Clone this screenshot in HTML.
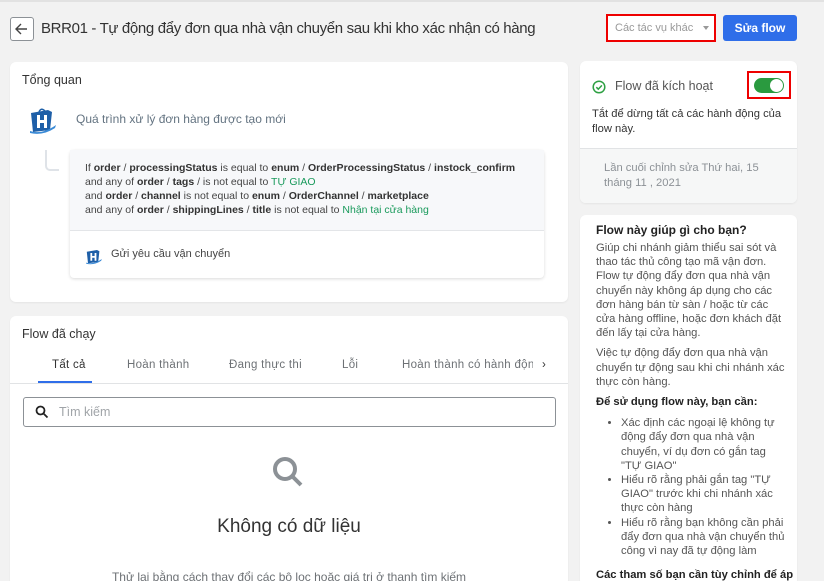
<!DOCTYPE html>
<html><head><meta charset="utf-8"><style>
*{box-sizing:border-box;margin:0;padding:0}
html,body{width:824px;height:581px;overflow:hidden}
body{background:#f2f2f2;font-family:"Liberation Sans",sans-serif;color:#212b36;position:relative}
.abs{position:absolute}
.card{position:absolute;background:#fff;border-radius:6px;box-shadow:0 1px 2px rgba(0,0,0,.06)}
b{font-weight:bold;color:#333}
.g{color:#1a9a5c}
</style></head><body>
<div class="abs" style="left:0;top:0;width:824px;height:2px;background:#e2e2e2"></div>
<div class="abs" style="left:10px;top:17px;width:24px;height:24px;border:1px solid #8c9196;border-radius:3px;background:#fff">
<svg width="22" height="22" viewBox="0 0 22 22"><path d="M16 11H6M10 6l-5 5 5 5" stroke="#444" stroke-width="1.4" fill="none"/></svg></div>
<div class="abs" style="left:41px;top:20px;font-size:15px;color:#333;letter-spacing:-0.35px">BRR01 - Tự động đẩy đơn qua nhà vận chuyển sau khi kho xác nhận có hàng</div>
<div class="abs" style="left:606px;top:14px;width:110px;height:28px;border:2px solid #e00;background:#fff;font-size:11px;color:#999;padding:6px 0 0 7px">Các tác vụ khác<span style="position:absolute;right:5px;top:10px;border-left:3px solid transparent;border-right:3px solid transparent;border-top:4px solid #999"></span></div>
<div class="abs" style="left:723px;top:15px;width:74px;height:26px;background:#2f6ee9;border-radius:3px;color:#fff;font-size:12px;font-weight:bold;text-align:center;line-height:26px">Sửa flow</div>

<div class="card" style="left:10px;top:62px;width:558px;height:240px">
<div class="abs" style="left:12px;top:11px;font-size:12.5px;color:#333">Tổng quan</div>
<svg class="abs" style="left:18px;top:43px" width="30" height="30" viewBox="0 0 30 30"><path d="M3 8l17-3 4 2-2 18-17 2z" fill="#1e5fa8"/><path d="M9 10h3v5h4v-5h3v13h-3v-5h-4v5h-3z" fill="#fff"/><path d="M2 26q12 4 26-6l-1 3q-12 8-25 5z" fill="#3a8ad6"/><path d="M11 7q2-5 6-1" stroke="#1e5fa8" fill="none" stroke-width="1.5"/></svg>
<div class="abs" style="left:66px;top:50px;font-size:12px;color:#637381">Quá trình xử lý đơn hàng được tạo mới</div>
<div class="abs" style="left:35px;top:88px;width:14px;height:21px;border-left:2px solid #dfe3e8;border-bottom:2px solid #dfe3e8;border-bottom-left-radius:5px"></div>
<div class="abs" style="left:60px;top:88px;width:474px;height:128px;border-radius:4px;box-shadow:0 1px 3px rgba(0,0,0,.15);background:#fff">
<div style="background:#f7f8fa;height:81px;border-bottom:1px solid #e3e5e8;padding:11px 0 0 15px;font-size:10.5px;line-height:14px;color:#444">
If <b>order</b> / <b>processingStatus</b> is equal to <b>enum</b> / <b>OrderProcessingStatus</b> / <b>instock_confirm</b><br>
and any of <b>order</b> / <b>tags</b> / is not equal to <span class="g">TỰ GIAO</span><br>
and <b>order</b> / <b>channel</b> is not equal to <b>enum</b> / <b>OrderChannel</b> / <b>marketplace</b><br>
and any of <b>order</b> / <b>shippingLines</b> / <b>title</b> is not equal to <span class="g">Nhận tại cửa hàng</span></div>
<svg class="abs" style="left:14px;top:97px" width="20" height="18" viewBox="0 0 30 30"><path d="M3 8l17-3 4 2-2 18-17 2z" fill="#1e5fa8"/><path d="M9 10h3v5h4v-5h3v13h-3v-5h-4v5h-3z" fill="#fff"/><path d="M2 26q12 4 26-6l-1 3q-12 8-25 5z" fill="#3a8ad6"/></svg>
<div class="abs" style="left:41px;top:98px;font-size:11px;color:#444">Gửi yêu cầu vận chuyển</div>
</div></div>

<div class="card" style="left:10px;top:316px;width:558px;height:270px">
<div class="abs" style="left:12px;top:11px;font-size:12.5px;color:#333">Flow đã chạy</div>
<div class="abs" style="left:0;top:67px;width:558px;height:1px;background:#e1e3e5"></div>
<div class="abs" style="left:28px;top:65px;width:54px;height:2px;background:#2f6ee9"></div>
<div class="abs" style="top:43px;left:0;font-size:11.5px;color:#6d7175;letter-spacing:.3px;white-space:nowrap">
<span class="abs" style="left:42px;color:#333">Tất cả</span><span class="abs" style="left:117px">Hoàn thành</span><span class="abs" style="left:219px">Đang thực thi</span><span class="abs" style="left:332px">Lỗi</span><span class="abs" style="left:392px;width:131px;overflow:hidden">Hoàn thành có hành động</span><span class="abs" style="left:532px;color:#333">›</span></div>
<div class="abs" style="left:13px;top:81px;width:533px;height:30px;border:1px solid #8c9196;border-radius:3px">
<svg class="abs" style="left:11px;top:7px" width="14" height="14" viewBox="0 0 14 14"><circle cx="5.5" cy="5.5" r="4" stroke="#222" stroke-width="1.8" fill="none"/><path d="M8.5 8.5l4 4" stroke="#222" stroke-width="1.8"/></svg>
<span class="abs" style="left:35px;top:7px;font-size:12.5px;color:#a0a4a8">Tìm kiếm</span></div>
<svg class="abs" style="left:260px;top:138px" width="36" height="36" viewBox="0 0 36 36"><circle cx="15" cy="15" r="10" stroke="#8c9196" stroke-width="4" fill="none"/><path d="M22 22l9 9" stroke="#8c9196" stroke-width="4"/></svg>
<div class="abs" style="left:0;width:558px;top:200px;text-align:center;font-size:19px;color:#333">Không có dữ liệu</div>
<div class="abs" style="left:0;width:558px;top:254px;text-align:center;font-size:12px;color:#6d7175">Thử lại bằng cách thay đổi các bộ lọc hoặc giá trị ở thanh tìm kiếm</div>
</div>

<div class="card" style="left:580px;top:61px;width:217px;height:142px;overflow:hidden">
<svg class="abs" style="left:12px;top:19px" width="14" height="14" viewBox="0 0 14 14"><circle cx="7" cy="7" r="5.8" stroke="#2ea043" stroke-width="1.5" fill="none"/><path d="M4.3 7.2l2 2 3.6-3.8" stroke="#2ea043" stroke-width="1.5" fill="none"/></svg>
<div class="abs" style="left:35px;top:18px;font-size:12.5px;color:#555">Flow đã kích hoạt</div>
<div class="abs" style="left:167px;top:10px;width:44px;height:28px;border:2px solid #e00"></div>
<div class="abs" style="left:174px;top:17px;width:30px;height:15px;background:#2a9a3f;border-radius:8px"><div style="position:absolute;right:1px;top:1px;width:13px;height:13px;border-radius:50%;background:#fff"></div></div>
<div class="abs" style="left:12px;top:46px;width:200px;font-size:11.2px;line-height:15px;color:#333">Tắt để dừng tất cả các hành động của flow này.</div>
<div class="abs" style="left:0;top:87px;width:217px;height:55px;background:#f6f7f7;border-top:1px solid #e1e3e5;padding:12px 0 0 24px;font-size:11.2px;line-height:15px;color:#8c9196">Lần cuối chỉnh sửa Thứ hai, 15<br>tháng 11 , 2021</div>
</div>

<div class="card" style="left:580px;top:215px;width:217px;height:371px;overflow:hidden;padding:8px 8px 0 16px;font-size:11.2px;line-height:14.2px;color:#555">
<div style="font-weight:bold;color:#222;font-size:12px;line-height:15px;margin-bottom:3px">Flow này giúp gì cho bạn?</div>
<div style="margin-bottom:6px">Giúp chi nhánh giảm thiểu sai sót và thao tác thủ công tạo mã vận đơn. Flow tự động đẩy đơn qua nhà vận chuyển này không áp dụng cho các đơn hàng bán từ sàn / hoặc từ các cửa hàng offline, hoặc đơn khách đặt đến lấy tại cửa hàng.</div>
<div style="margin-bottom:6px">Việc tự động đẩy đơn qua nhà vận chuyển tự động sau khi chi nhánh xác thực còn hàng.</div>
<div style="font-weight:bold;color:#222;margin-bottom:7px">Để sử dụng flow này, bạn cần:</div>
<ul style="padding-left:25px;margin-bottom:10px"><li>Xác định các ngoại lệ không tự động đẩy đơn qua nhà vận chuyển, ví dụ đơn có gắn tag "TỰ GIAO"</li><li>Hiểu rõ rằng phải gắn tag "TỰ GIAO" trước khi chi nhánh xác thực còn hàng</li><li>Hiểu rõ rằng bạn không cần phải đẩy đơn qua nhà vận chuyển thủ công vì nay đã tự động làm</li></ul>
<div style="font-weight:bold;color:#222;white-space:nowrap">Các tham số bạn cần tùy chỉnh để áp</div>
</div>
</body></html>
